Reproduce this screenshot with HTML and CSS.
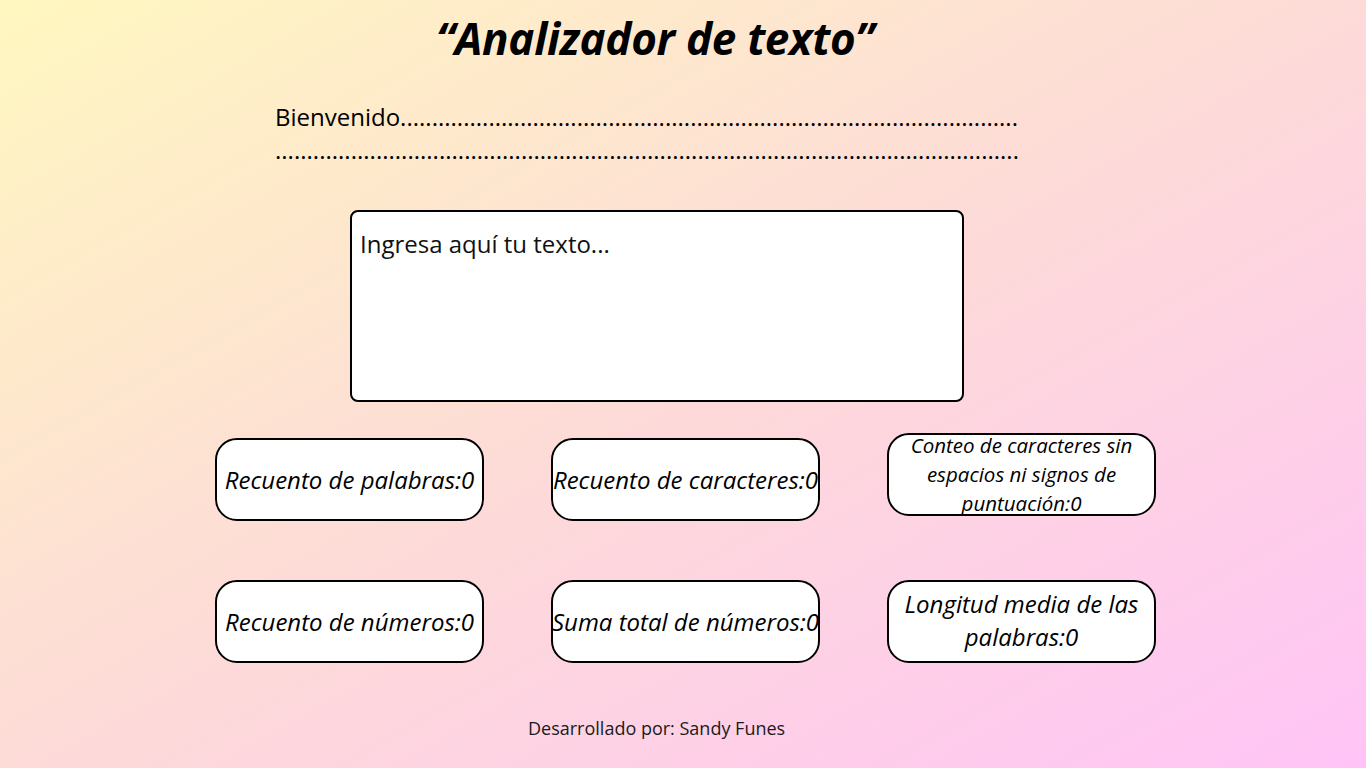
FILE: index.html
```html
<!doctype html>
<html lang="es">
<head>
  <meta charset="UTF-8">
  <title>Analizador de texto</title>
  <link rel="stylesheet" href="styles.css">
</head>
<body>
<main class="page">
  <h1 class="title">“Analizador de texto”</h1>

  <p class="welcome">Bienvenido........................................................................................................................................................................................................................</p>

  <textarea class="input" placeholder="Ingresa aquí tu texto..."></textarea>

  <section class="stats">
    <div class="stat">Recuento de palabras:0</div>
    <div class="stat">Recuento de caracteres:0</div>
    <div class="stat small up">Conteo de caracteres sin espacios ni signos de puntuación:0</div>
    <div class="stat">Recuento de números:0</div>
    <div class="stat">Suma total de números:0</div>
    <div class="stat wrap">Longitud media de las palabras:0</div>
  </section>

  <footer class="credits">Desarrollado por: Sandy Funes</footer>
</main>
</body>
</html>
```

FILE: styles.css
```css
html, body {
  margin: 0;
  height: 100%;
}

body {
  background: linear-gradient(to bottom right, #fff7c0, #fddbd8 50%, #ffc4f6);
  font-family: "Open Sans", "Liberation Sans", sans-serif;
  color: #000;
  overflow: hidden;
}

.page {
  width: 1366px;
  height: 768px;
  display: flex;
  flex-direction: column;
  align-items: flex-start;
}

.title {
  margin: 12px 0 0 436px;
  font-size: 44px;
  line-height: 53px;
  font-weight: 700;
  font-style: italic;
  letter-spacing: -0.3px;
}

.welcome {
  width: 746px;
  height: 66px;
  margin: 35px 0 0 275px;
  font-size: 24px;
  line-height: 33px;
  overflow-wrap: anywhere;
}

.input {
  box-sizing: border-box;
  width: 614px;
  height: 192px;
  margin: 44px 0 0 350px;
  padding: 15px 8px;
  border: 2px solid #000;
  border-radius: 8px;
  background: #fff;
  font-family: inherit;
  font-size: 24px;
  resize: none;
  outline: none;
}

.input::placeholder {
  color: #111;
}

.stats {
  display: grid;
  grid-template-columns: repeat(3, 269px);
  column-gap: 67px;
  row-gap: 54px;
  margin: 31px 0 0 215px;
}

.stat {
  box-sizing: border-box;
  height: 83px;
  margin-top: 5px;
  border: 2.5px solid #000;
  border-radius: 22px;
  background: #fff;
  display: flex;
  align-items: center;
  justify-content: center;
  text-align: center;
  font-size: 24px;
  font-style: italic;
  white-space: nowrap;
}

.stat.up {
  margin-top: 0;
}

.stat.small {
  white-space: normal;
  font-size: 20.5px;
  line-height: 29px;
  padding: 0 10px;
}

.stat.wrap {
  white-space: normal;
  line-height: 33px;
  padding: 0 10px 4px;
}

.credits {
  margin: 53px 0 0 528px;
  font-size: 18px;
  color: #1a1a1a;
}
```
